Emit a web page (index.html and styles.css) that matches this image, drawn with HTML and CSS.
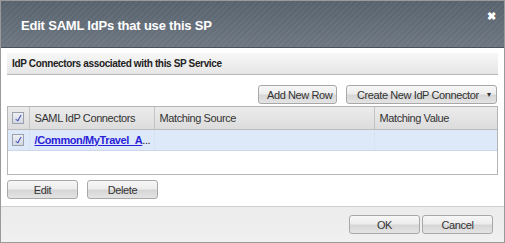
FILE: index.html
```html
<!DOCTYPE html>
<html lang="en">
<head>
<meta charset="UTF-8" />
<title>Edit SAML IdPs that use this SP</title>
<link rel="stylesheet" href="styles.css">
</head>
<body>

<div class="dialog">
  <div class="titlebar">
    <h1>Edit SAML IdPs that use this SP</h1>
    <span class="close">&#10006;</span>
  </div>

  <div class="content">
    <div class="section-head">IdP Connectors associated with this SP Service</div>

    <div class="toolbar">
      <button class="btn add">Add New Row</button>
      <button class="btn btn-menu">Create New IdP Connector <span class="caret">&#9662;</span></button>
    </div>

    <div class="grid">
      <table>
        <thead>
          <tr>
            <th class="chk"><span class="box checked"></span></th>
            <th class="c1">SAML IdP Connectors</th>
            <th class="c2">Matching Source</th>
            <th class="c3">Matching Value</th>
          </tr>
        </thead>
        <tbody>
          <tr class="selected">
            <td class="chk"><span class="box checked"></span></td>
            <td class="c1"><a href="#">/Common/MyTravel_A</a>...</td>
            <td></td>
            <td></td>
          </tr>
        </tbody>
      </table>
    </div>

    <div class="actions">
      <button class="btn wide">Edit</button>
      <button class="btn wide">Delete</button>
    </div>
  </div>

  <div class="footer">
    <button class="btn wide">OK</button>
    <button class="btn wide">Cancel</button>
  </div>
</div>

</body>
</html>
```

FILE: styles.css
```css
* { margin:0; padding:0; box-sizing:border-box; }
body {
  font-family: 'Liberation Sans', Arial, sans-serif;
  background:#ffffff;
  color:#222;
}
.dialog {
  width:505px; height:243px;
  border:1px solid #9a9a9a;
  display:flex; flex-direction:column;
  background:#fff;
}

/* title bar with the diagonal stripes */
.titlebar {
  height:47px; flex:none;
  display:flex; align-items:center; justify-content:space-between;
  padding:0 8px 0 20px;
  background:
    repeating-linear-gradient(135deg, rgba(255,255,255,0.04) 0 2px, rgba(0,0,0,0) 2px 4px),
    linear-gradient(#58626d, #6c7681);
  border-bottom:1px solid #4a525c;
}
.titlebar h1 {
  font-size:13px; font-weight:bold; color:#fff;
  letter-spacing:-0.2px;
  margin-top:2px;
}
.close {
  align-self:flex-start; margin-top:9px;
  color:#fff; font-size:11px; font-weight:bold;
}

.content { flex:1; padding:5px 6px 0 6px; }
.section-head {
  height:22px; line-height:21px;
  padding-left:5px;
  font-size:10px; font-weight:bold; color:#222;
  letter-spacing:-0.35px;
  background:linear-gradient(#f7f7f7, #e6e6e6);
  border-bottom:1px solid #b8b8b8;
}

.btn {
  font-family:'Liberation Sans', Arial, sans-serif;
  font-size:11px; letter-spacing:-0.4px; color:#333;
  height:19px; padding:0 8px;
  white-space:nowrap;
  border:1px solid #a8a8a8; border-radius:3px;
  background:linear-gradient(#f7f7f7 0%, #ededed 45%, #d6d6d6 55%, #e4e4e4 100%);
  cursor:pointer;
}
.btn.wide { width:71px; }
.btn.add { width:79px; }
.btn-menu {
  width:151px; padding:0 5px 0 10px;
  display:flex; align-items:center; justify-content:space-between;
}
.caret { font-size:8px; }

.toolbar {
  display:flex; justify-content:flex-end; gap:9px;
  margin-top:10px; padding-right:1px;
}

.grid {
  margin-top:2px;
  height:69px;
  border:1px solid #b5b5b5;
}
table {
  width:100%; table-layout:fixed; border-collapse:collapse;
  font-size:11px; letter-spacing:-0.4px;
}
th {
  height:22px; text-align:left; font-weight:normal; color:#333;
  padding-left:5px;
  background:linear-gradient(#ebebeb, #dcdcdc);
  border-right:1px solid #c4c4c4;
  border-bottom:1px solid #bcbcbc;
}
th:last-child { border-right:none; }
th.chk, td.chk { width:21px; padding-left:4px; }
th.c1 { width:125px; }
th.c2 { width:220px; }
td {
  height:21px; padding-left:5px;
  white-space:nowrap; overflow:hidden;
  border-right:1px solid #d8e2f0;
}
td:last-child { border-right:none; }
tr.selected td { background:#dde8f8; border-bottom:1px solid #ccd8ea; }
td a { color:#2a22d8; font-weight:bold; }
.box {
  display:inline-block; width:12px; height:12px;
  border:1px solid #9aa0ac; background:linear-gradient(#eef0f5, #d3d7e2);
  position:relative; vertical-align:middle;
}
.box.checked::after {
  content:''; position:absolute; left:4px; top:1px;
  width:2px; height:6px;
  border:solid #3a48b8; border-width:0 1.5px 1.5px 0;
  transform:rotate(30deg);
}

.actions { display:flex; gap:9px; margin-top:5px; }

.footer {
  height:36px; flex:none;
  display:flex; justify-content:flex-end; align-items:center; gap:2px;
  padding-right:11px;
  background:linear-gradient(#ececec, #f0f0f0);
  border-top:1px solid #cfcfcf;
}
```
